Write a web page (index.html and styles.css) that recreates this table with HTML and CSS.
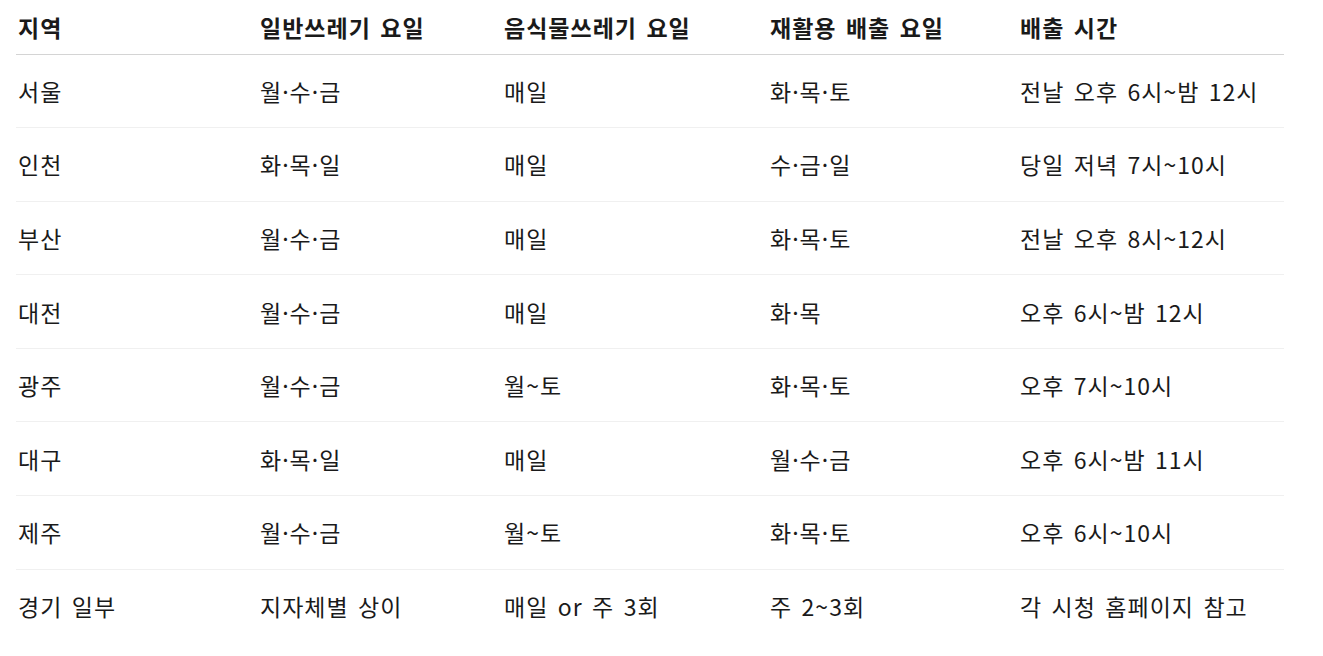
FILE: index.html
```html
<!DOCTYPE html>
<html lang="ko">
<head>
<meta charset="utf-8">
<link rel="stylesheet" href="styles.css">
</head>
<body>
<table class="schedule">
  <colgroup>
    <col class="c1"><col class="c2"><col class="c3"><col class="c4"><col class="c5">
  </colgroup>
  <thead>
    <tr><th>지역</th><th>일반쓰레기 요일</th><th>음식물쓰레기 요일</th><th>재활용 배출 요일</th><th>배출 시간</th></tr>
  </thead>
  <tbody>
    <tr><td>서울</td><td>월·수·금</td><td>매일</td><td>화·목·토</td><td>전날 오후 6시~밤 12시</td></tr>
    <tr><td>인천</td><td>화·목·일</td><td>매일</td><td>수·금·일</td><td>당일 저녁 7시~10시</td></tr>
    <tr><td>부산</td><td>월·수·금</td><td>매일</td><td>화·목·토</td><td>전날 오후 8시~12시</td></tr>
    <tr><td>대전</td><td>월·수·금</td><td>매일</td><td>화·목</td><td>오후 6시~밤 12시</td></tr>
    <tr><td>광주</td><td>월·수·금</td><td>월~토</td><td>화·목·토</td><td>오후 7시~10시</td></tr>
    <tr><td>대구</td><td>화·목·일</td><td>매일</td><td>월·수·금</td><td>오후 6시~밤 11시</td></tr>
    <tr><td>제주</td><td>월·수·금</td><td>월~토</td><td>화·목·토</td><td>오후 6시~10시</td></tr>
    <tr><td>경기 일부</td><td>지자체별 상이</td><td>매일 or 주 3회</td><td>주 2~3회</td><td>각 시청 홈페이지 참고</td></tr>
  </tbody>
</table>
</body>
</html>
```

FILE: styles.css
```css
html, body {
  margin: 0;
  padding: 0;
  background: #ffffff;
}
body {
  padding: 0 39px 0 16px;
  font-family: "Noto Sans CJK KR", "Noto Sans", sans-serif;
  color: #1a1a1a;
}
.schedule {
  width: 1268px;
  border-collapse: collapse;
  table-layout: fixed;
  font-size: 23px;
  letter-spacing: 1px;
  word-spacing: 2px;
}
.c1 { width: 242px; }
.c2 { width: 244px; }
.c3 { width: 266px; }
.c4 { width: 250px; }
.c5 { width: 266px; }
.schedule th {
  text-align: left;
  font-weight: 700;
  height: 54px;
  padding: 0 2px;
  border-bottom: 1px solid #d4d4d4;
  box-sizing: border-box;
  vertical-align: middle;
}
.schedule td {
  height: 73.6px;
  padding: 0 2px;
  border-bottom: 1px solid #f0f0f0;
  box-sizing: border-box;
  vertical-align: middle;
  font-weight: 400;
}
.schedule tbody tr:last-child td {
  border-bottom: none;
}
```
